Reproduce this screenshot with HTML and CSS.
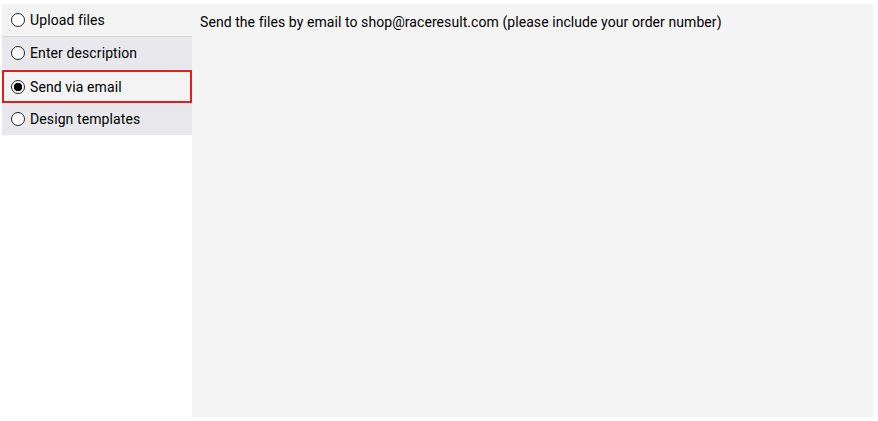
FILE: index.html
```html
<!DOCTYPE html>
<html lang="en">
  <head>
    <meta charset="UTF-8" />
    <title>Upload</title>
    <link rel="stylesheet" href="styles.css">
  </head>
  <body>
    <div class="page">
      <div class="tabs">
        <label class="tab light"><input type="radio" name="mode" /> Upload files</label>
        <label class="tab"><input type="radio" name="mode" /> Enter description</label>
        <label class="tab active"><input type="radio" name="mode" checked /> Send via email</label>
        <label class="tab"><input type="radio" name="mode" /> Design templates</label>
      </div>
      <div class="content">
        Send the files by email to shop@raceresult.com (please include your order number)
      </div>
    </div>
  </body>
</html>
```

FILE: styles.css
```css
body {
  margin: 0;
  font-family: Roboto, "Noto Sans", sans-serif;
  font-size: 14px;
  color: #000;
  background-color: #fff;
}

.page {
  display: flex;
  height: 413px;
  padding: 4px 5px 0 2px;
}

.tabs {
  width: 190px;
  display: flex;
  flex-direction: column;
}

.tab {
  display: flex;
  align-items: center;
  gap: 5px;
  height: 32px;
  padding-left: 9px;
  background-color: #e8e8ec;
  border-bottom: 1px solid #f8f8f8;
  box-sizing: content-box;
  letter-spacing: 0.1px;
  cursor: pointer;
}

.tab.light {
  background-color: #f3f3f4;
  border-bottom-color: #d6d6da;
}

.tab input {
  appearance: none;
  margin: 0;
  width: 14px;
  height: 14px;
  border: 1px solid #222;
  border-radius: 50%;
  background-color: #fff;
  box-sizing: border-box;
}

.tab input:checked {
  background: radial-gradient(circle, #000 0, #000 4px, #fff 4.5px);
}

.tab.active {
  background-color: #f3f3f4;
  border: 2px solid #e01e1e;
  height: 29px;
  padding-left: 7px;
}

.content {
  flex: 1;
  background-color: #f4f4f4;
  padding: 10px 8px;
  letter-spacing: 0.07px;
}
```
